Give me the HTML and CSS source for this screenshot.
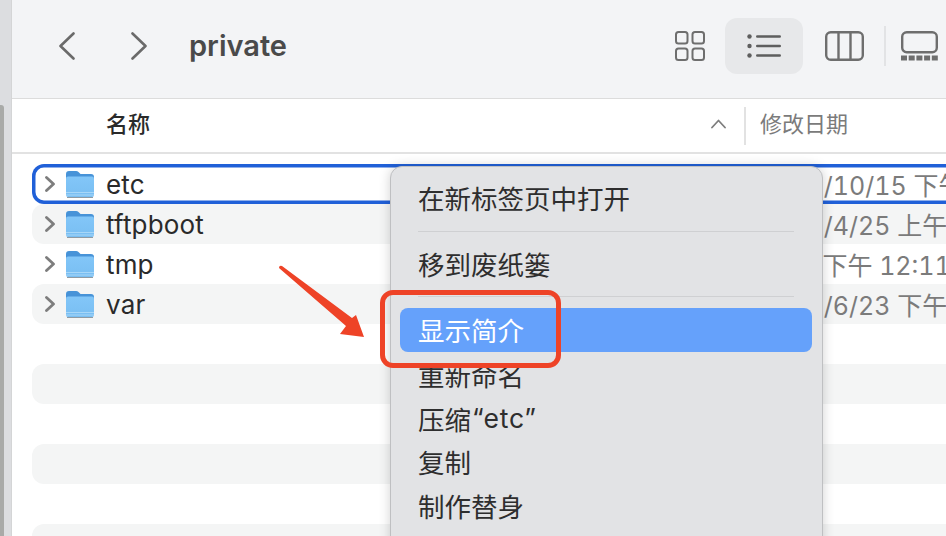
FILE: index.html
```html
<!DOCTYPE html>
<html lang="zh-CN">

<head>
  <meta charset="UTF-8">
  <title>private</title>
  <link rel="stylesheet" href="styles.css">
</head>

<body>
  <svg class="defs" width="0" height="0">
    <defs>
      <linearGradient id="folderBody" x1="0" y1="0" x2="0" y2="1">
        <stop offset="0" stop-color="#82c6f8" />
        <stop offset="1" stop-color="#79bef2" />
      </linearGradient>
      <symbol id="folder" viewBox="0 0 28 28">
        <path d="M0 4q0-3 3-3h7q1.500 0 2.500 1l2 2h10.500q3 0 3 3v6H0z" fill="#4793d8" />
        <path d="M0 8.500q0-2 2-2h24q2 0 2 2v16.500q0 2-2 2H2q-2 0-2-2z" fill="url(#folderBody)" />
        <path d="M0 22.500h28M0 25h28" stroke="#a8d7f8" stroke-width="1" />
        <path d="M1 27.500h26" stroke="#8f9aa3" stroke-width="1" />
      </symbol>
      <symbol id="expand" viewBox="0 0 10 16">
        <path d="M1.500 1.500L8.500 8l-7 6.500" fill="none" stroke="#7d7d7d" stroke-width="2.800" stroke-linecap="round" stroke-linejoin="round" />
      </symbol>
    </defs>
  </svg>

  <div class="edge">
    <div class="edge-thumb"></div>
  </div>

  <main class="window">
    <header class="toolbar">
      <div class="nav">
        <svg class="nav-icon" width="16" height="28" viewBox="0 0 16 28">
          <path d="M14.500 1.500L1.500 14l13 12.500" fill="none" stroke="#6a6a6a" stroke-width="2.600" stroke-linecap="round" stroke-linejoin="round" />
        </svg>
        <svg class="nav-icon" width="16" height="28" viewBox="0 0 16 28">
          <path d="M1.500 1.500L14.500 14l-13 12.500" fill="none" stroke="#6a6a6a" stroke-width="2.600" stroke-linecap="round" stroke-linejoin="round" />
        </svg>
      </div>
      <h1 class="title">private</h1>

      <div class="views">
        <svg class="view-grid" width="30" height="30" viewBox="0 0 30 30" fill="none" stroke="#6e6e6e" stroke-width="2">
          <rect x="1" y="1" width="11.500" height="11.500" rx="2.500" />
          <rect x="17.500" y="1" width="11.500" height="11.500" rx="2.500" />
          <rect x="1" y="17.500" width="11.500" height="11.500" rx="2.500" />
          <rect x="17.500" y="17.500" width="11.500" height="11.500" rx="2.500" />
        </svg>
        <div class="view-active">
          <svg width="34" height="24" viewBox="0 0 34 24" fill="#5e5e5e">
            <circle cx="2.500" cy="2.500" r="2.200" />
            <circle cx="2.500" cy="12" r="2.200" />
            <circle cx="2.500" cy="21.500" r="2.200" />
            <rect x="9" y="1.200" width="25" height="2.600" rx="1.300" />
            <rect x="9" y="10.700" width="25" height="2.600" rx="1.300" />
            <rect x="9" y="20.200" width="25" height="2.600" rx="1.300" />
          </svg>
        </div>
        <svg class="view-columns" width="39" height="30" viewBox="0 0 39 30" fill="none" stroke="#6e6e6e" stroke-width="2.400">
          <rect x="1.200" y="1.200" width="36.600" height="27.600" rx="4.500" />
          <path d="M13.500 1v28M25.500 1v28" />
        </svg>
        <div class="view-divider"></div>
        <svg class="view-gallery" width="37" height="30" viewBox="0 0 37 30" fill="#6e6e6e">
          <rect x="1.200" y="1.200" width="34.600" height="20" rx="4.500" fill="none" stroke="#6e6e6e" stroke-width="2.400" />
          <rect x="0" y="24.500" width="6" height="5" />
          <rect x="7.700" y="24.500" width="6" height="5" />
          <rect x="15.400" y="24.500" width="6" height="5" />
          <rect x="23.100" y="24.500" width="6" height="5" />
          <rect x="30.800" y="24.500" width="6" height="5" />
        </svg>
      </div>
    </header>

    <div class="columns">
      <span class="col-name">名称</span>
      <svg class="sort" width="15" height="10" viewBox="0 0 15 10">
        <path d="M1 8.500L7.500 1.500 14 8.500" fill="none" stroke="#7d7d7d" stroke-width="1.800" stroke-linecap="round" stroke-linejoin="round" />
      </svg>
      <div class="col-divider"></div>
      <span class="col-date">修改日期</span>
    </div>

    <div class="list">
      <div class="row focused">
        <svg class="row-expand"><use href="#expand" /></svg>
        <svg class="row-folder"><use href="#folder" /></svg>
        <span class="row-name">etc</span>
        <span class="row-date">2022/10/15 下午 3:20</span>
      </div>
      <div class="row">
        <svg class="row-expand"><use href="#expand" /></svg>
        <svg class="row-folder"><use href="#folder" /></svg>
        <span class="row-name">tftpboot</span>
        <span class="row-date">2022/4/25 上午 9:14</span>
      </div>
      <div class="row">
        <svg class="row-expand"><use href="#expand" /></svg>
        <svg class="row-folder"><use href="#folder" /></svg>
        <span class="row-name">tmp</span>
        <span class="row-date">今天  下午 12:11</span>
      </div>
      <div class="row">
        <svg class="row-expand"><use href="#expand" /></svg>
        <svg class="row-folder"><use href="#folder" /></svg>
        <span class="row-name">var</span>
        <span class="row-date">2023/6/23 下午 5:02</span>
      </div>
      <div class="row"></div>
      <div class="row"></div>
      <div class="row"></div>
      <div class="row"></div>
      <div class="row"></div>
      <div class="row"></div>
    </div>
  </main>

  <!-- context menu and the annotation drawn over the window -->
  <div class="menu">
    <div class="menu-item">在新标签页中打开</div>
    <div class="menu-line"></div>
    <div class="menu-item">移到废纸篓</div>
    <div class="menu-line"></div>
    <div class="menu-item active">显示简介</div>
    <div class="menu-item after-active">重新命名</div>
    <div class="menu-item">压缩<span class="menu-quoted">“etc”</span></div>
    <div class="menu-item">复制</div>
    <div class="menu-item">制作替身</div>
  </div>

  <div class="mark-box"></div>
  <svg class="mark-arrow" width="90" height="76" viewBox="0 0 90 76">
    <path d="M1 3Q1 0 4 1L74 53 78 50 86 72 62 69 68 61Z" fill="#ee4327" />
  </svg>
</body>

</html>
```

FILE: styles.css
```css
html,
body {
  height: 100%;
}

body {
  display: flex;
  position: relative;
  width: 946px;
  height: 536px;
  margin: 0;
  overflow: hidden;
  background: #fff;
  color: #2a2a2a;
  font-family: Inter, "Noto Sans CJK SC", sans-serif;
}

.defs {
  position: absolute;
}

/* strip of the window behind */
.edge {
  flex: none;
  width: 11px;
  border-right: 1px solid #d4d5d6;
  background: #dcdde0;
}

.edge-thumb {
  width: 4px;
  height: 431px;
  margin-top: 105px;
  border-top-right-radius: 3px;
  background: #a9aaa8;
}

.window {
  display: flex;
  flex: 1;
  flex-direction: column;
  min-width: 0;
}

/* toolbar */
.toolbar {
  display: flex;
  flex: none;
  align-items: center;
  box-sizing: border-box;
  height: 99px;
  padding-bottom: 6px;
  border-bottom: 1px solid #dcdcdc;
  background: #f3f4f6;
}

.nav {
  display: flex;
  gap: 56px;
  margin-left: 47px;
}

.title {
  margin: 0 0 0 42px;
  color: #4a4a4a;
  font-size: 29px;
  font-weight: 600;
  line-height: 36px;
}

.views {
  display: flex;
  align-items: center;
  margin-left: auto;
}

.view-active {
  display: flex;
  align-items: center;
  justify-content: center;
  width: 78px;
  height: 56px;
  margin: 0 22px 0 20px;
  border-radius: 12px;
  background: #e7e8ea;
}

.view-divider {
  width: 2px;
  height: 40px;
  margin: 0 15px 0 20px;
  background: #e2e3e5;
}

.view-gallery {
  margin-right: 8px;
}

/* column headers */
.columns {
  display: flex;
  flex: none;
  align-items: center;
  box-sizing: border-box;
  height: 55px;
  border-bottom: 2px solid #e2e2e2;
  font-size: 22px;
}

.col-name {
  width: 605px;
  margin-bottom: 7px;
  margin-left: 94px;
  color: #2a2a2a;
  font-weight: 500;
}

.sort {
  margin-bottom: 3px;
}

.col-divider {
  width: 2px;
  height: 38px;
  margin: 0 14px 0 18px;
  background: #e2e2e2;
}

.col-date {
  margin-bottom: 7px;
  color: #7b7b7b;
  white-space: nowrap;
}

/* file rows */
.list {
  flex: 1;
  padding-top: 10px;
  overflow: hidden;
}

.row {
  display: grid;
  grid-template-columns: 34px 40px 653px 400px;
  align-items: center;
  box-sizing: border-box;
  width: 1000px;
  height: 40px;
  margin-left: 20px;
  border-radius: 12px;
  font-size: 26px;
}

.row:nth-child(even) {
  background: #f4f5f5;
}

.row.focused {
  box-shadow: inset 0 0 0 3.5px #2060d8;
}

.row-expand {
  justify-self: end;
  width: 10px;
  height: 16px;
  margin: 0 11px 1px 0;
}

.row-folder {
  width: 28px;
  height: 28px;
}

.row-name {
  color: #2a2a2a;
  letter-spacing: .15px;
}

.row-date {
  color: #7b7b7b;
  font-size: 25px;
  font-variant-numeric: tabular-nums;
  white-space: pre;
}

/* context menu */
.menu {
  position: absolute;
  top: 166px;
  left: 390px;
  box-sizing: border-box;
  width: 433px;
  height: 400px;
  padding: 10px 10px 0 9px;
  border: 1px solid #bfc0c2;
  border-radius: 12px;
  background: #e2e3e5;
  box-shadow: 0 0 12px rgba(0, 0, 0, .18);
  font-size: 26.5px;
}

.menu-item {
  display: flex;
  align-items: center;
  box-sizing: border-box;
  height: 43.5px;
  padding-bottom: 2px;
  padding-left: 18px;
  border-radius: 8px;
  color: #2e2e2e;
  white-space: nowrap;
}

.menu-item.active {
  height: 44px;
  background: #65a1fb;
  color: #fff;
}

.menu-item.after-active {
  margin-top: 2px;
}

.menu-quoted {
  margin-left: 1px;
  letter-spacing: .8px;
}

.menu-line {
  height: 1px;
  margin: 10px 18px 11px 18px;
  background: #cfd0d2;
}

/* red annotation */
.mark-box {
  position: absolute;
  top: 290px;
  left: 380px;
  box-sizing: border-box;
  width: 181px;
  height: 78px;
  border: 5px solid #ee4327;
  border-radius: 13px;
}

.mark-arrow {
  position: absolute;
  top: 265px;
  left: 278px;
}
```
